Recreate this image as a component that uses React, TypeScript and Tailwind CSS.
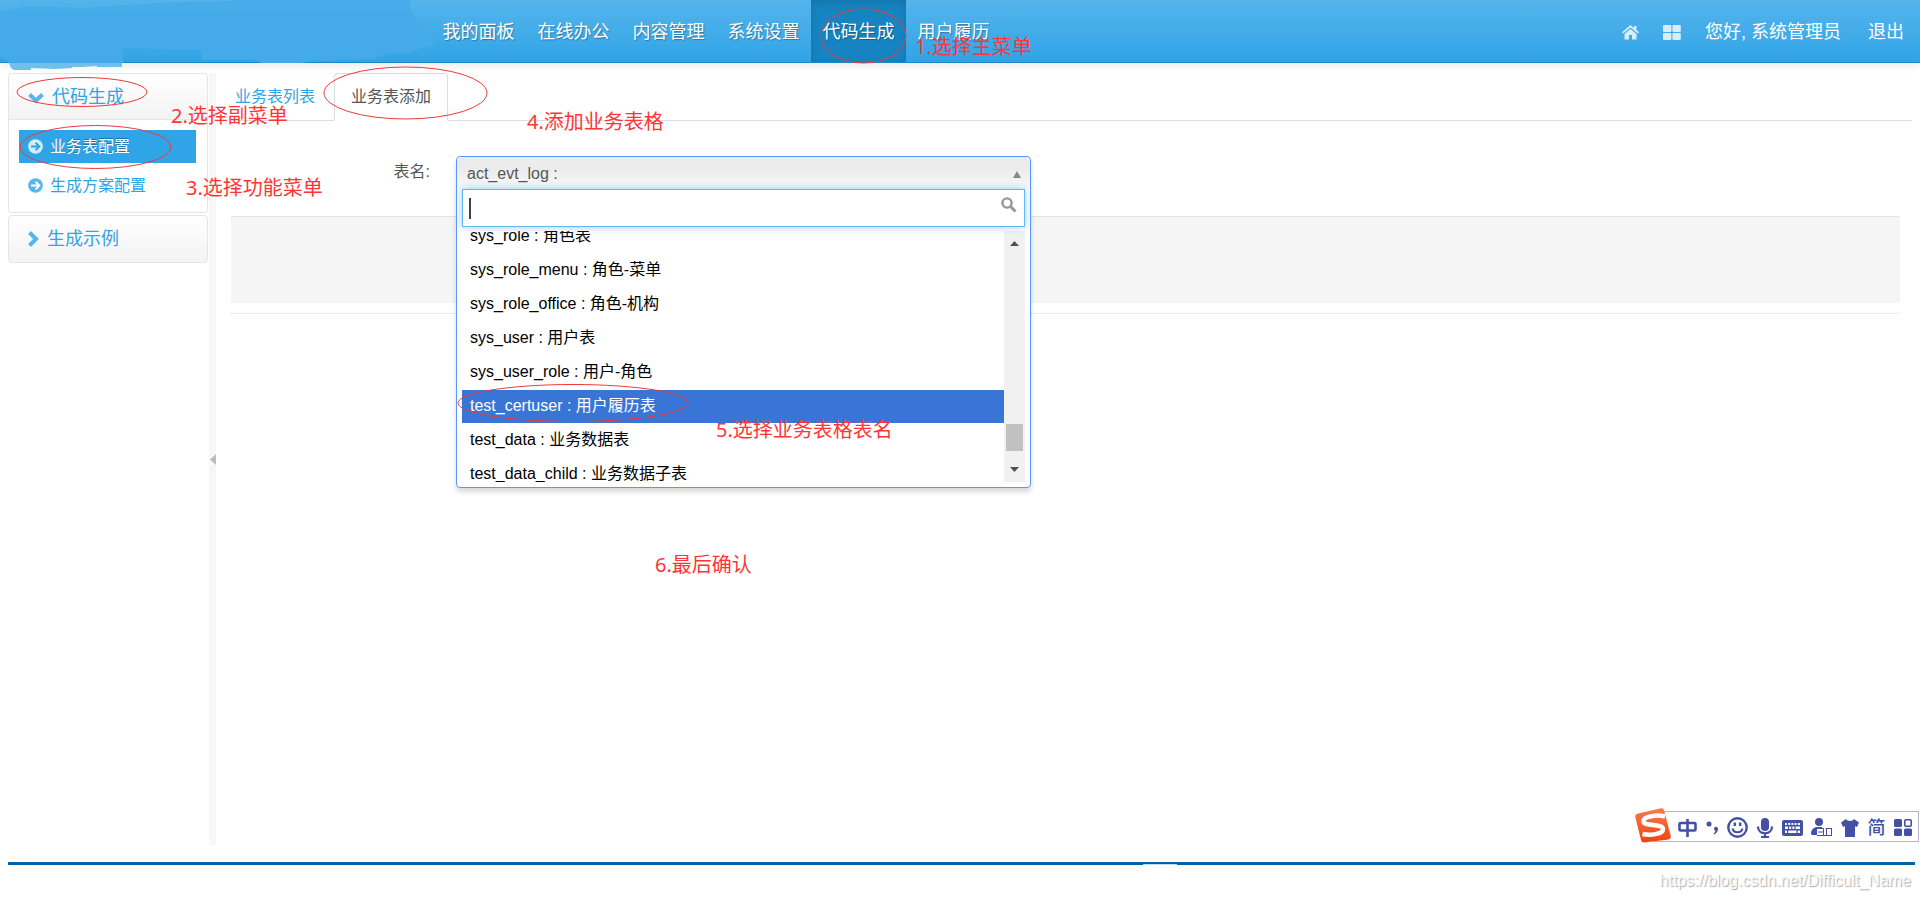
import React from "react";

const menu = ["我的面板", "在线办公", "内容管理", "系统设置", "代码生成", "用户履历"];

const tables = [
  "sys_role : 角色表",
  "sys_role_menu : 角色-菜单",
  "sys_role_office : 角色-机构",
  "sys_user : 用户表",
  "sys_user_role : 用户-角色",
  "test_certuser : 用户履历表",
  "test_data : 业务数据表",
  "test_data_child : 业务数据子表",
];

function Header() {
  return (
    <header className="relative flex h-[63px] items-stretch border-b border-[#1a87cd] bg-linear-to-b from-[#54b4eb] to-[#2fa4e7] text-lg text-white shadow-[0_1px_10px_rgba(0,0,0,0.12)]">
      <svg className="absolute top-0 left-0 h-[72px] w-[440px]" viewBox="0 0 440 72" aria-hidden="true">
        <path
          d="M0 12L28 6L80 8L160 3L260 0H410V10L420 24L434 34L434 45L414 50L412 53L385 54L372 59L320 61L300 63H262L254 60L202 60V50L160 49L123 48V63H9L0 56Z"
          fill="#46abe9"
          fillOpacity="0.9"
        />
        <path d="M9 63H122V67H97V66L82 67H72V68L55 69L31 68V70L14 70L11 68Z" fill="#70c0ee" />
      </svg>
      <nav className="ml-[431px] flex pt-0.5">
        {menu.map((m) => (
          <a
            key={m}
            href="#"
            className={
              m === "代码生成"
                ? "-mt-0.5 flex w-[95px] items-center justify-center bg-[#1684c2] pt-0.5 shadow-[inset_0_3px_8px_rgba(0,0,0,0.125)] [text-shadow:1px_1px_1px_rgba(0,0,0,0.3)]"
                : "flex w-[95px] items-center justify-center [text-shadow:1px_1px_1px_rgba(0,0,0,0.3)]"
            }
          >
            {m}
          </a>
        ))}
      </nav>
      <div className="ml-auto flex items-center pt-0.5 pr-4">
        <a href="#" aria-label="首页" className="mr-6">
          <svg width="17" height="15" viewBox="0 0 17 15" fill="#d6edfa" aria-hidden="true">
            <path d="M8.5 0L0 7.2L1.2 8.6L8.5 2.6L15.8 8.6L17 7.2L14.5 5V1H12V3Z" />
            <path d="M8.5 4L2.5 9V14.5H7V10H10V14.5H14.5V9Z" />
          </svg>
        </a>
        <a href="#" aria-label="主题" className="mr-6">
          <svg width="18" height="15" viewBox="0 0 18 15" fill="#d6edfa" aria-hidden="true">
            <rect width="8.4" height="7" rx="1" />
            <rect x="9.4" width="8.4" height="7" rx="1" />
            <rect y="8" width="8.4" height="7" rx="1" />
            <rect x="9.4" y="8" width="8.4" height="7" rx="1" />
          </svg>
        </a>
        <a href="#" className="mr-[27px]">您好, 系统管理员</a>
        <a href="#">退出</a>
      </div>
    </header>
  );
}

function CircleArrow({ fill, arrow }: { fill: string; arrow: string }) {
  return (
    <svg width="15" height="15" viewBox="0 0 15 15" aria-hidden="true">
      <circle cx="7.5" cy="7.5" r="7.3" fill={fill} />
      <path d="M3 7.5H11M7.6 3.8L11.3 7.5L7.6 11.2" fill="none" stroke={arrow} strokeWidth="2" />
    </svg>
  );
}

function Sidebar() {
  return (
    <aside className="flex w-[200px] shrink-0 flex-col gap-0.5 text-[#2fa4e7]">
      <section className="rounded border border-[#e5e5e5]">
        <button className="flex h-[46px] w-full items-center gap-2 rounded-t border-b border-[#e5e5e5] bg-linear-to-b from-white to-[#f3f3f3] pl-[19px] text-lg">
          <svg width="16" height="16" viewBox="0 0 16 16" aria-hidden="true">
            <path d="M1.5 5.5L8 11.5L14.5 5.5" fill="none" stroke="#55b5ec" strokeWidth="4" />
          </svg>
          代码生成
        </button>
        <ul className="flex flex-col gap-1.5 pt-2.5 pr-[11px] pb-2.5 pl-2.5">
          <li>
            <a
              href="#"
              className="flex h-[33px] items-center gap-[7px] bg-[#2fa4e7] pl-[9px] text-base text-white [text-shadow:0_-1px_0_rgba(0,0,0,0.3)]"
            >
              <CircleArrow fill="#d5edfa" arrow="#2fa4e7" />
              业务表配置
            </a>
          </li>
          <li>
            <a href="#" className="flex h-[33px] items-center gap-[7px] pl-[9px] text-base">
              <CircleArrow fill="#59b6ec" arrow="#ffffff" />
              生成方案配置
            </a>
          </li>
        </ul>
      </section>
      <section>
        <button className="flex h-12 w-full items-center gap-2 rounded border border-[#e5e5e5] bg-linear-to-b from-white to-[#f3f3f3] pl-[19px] text-lg">
          <svg width="11" height="16" viewBox="0 0 11 16" aria-hidden="true">
            <path d="M1.5 1.5L8 8L1.5 14.5" fill="none" stroke="#55b5ec" strokeWidth="4" />
          </svg>
          生成示例
        </button>
      </section>
    </aside>
  );
}

function TableSelect() {
  return (
    <div className="absolute top-0 left-0 z-10 flex h-[332px] w-[575px] flex-col rounded border border-[#5897fb] bg-white px-[5px] pb-[5px] shadow-[0_4px_5px_rgba(0,0,0,0.15)]">
      <button
        id="table-name"
        className="-mx-[5px] flex h-8 shrink-0 items-center justify-between rounded-t bg-linear-to-b from-[#ececec] from-40% to-[#fafafa] pt-0.5 pr-[9px] pl-2.5 text-base text-[#555]"
      >
        act_evt_log :
        <svg width="8" height="7" viewBox="0 0 8 7" aria-hidden="true">
          <path d="M4 0L8 7H0Z" fill="#888" />
        </svg>
      </button>
      <div className="relative flex h-[38px] shrink-0 items-center border border-[#66b5ee] bg-white shadow-[0_0_8px_rgba(82,168,236,0.6)]">
        <span className="ml-1.5 h-[21px] w-0.5 bg-[#444]" />
        <input aria-label="搜索" className="h-full min-w-0 flex-1 bg-transparent outline-none" />
        <svg className="mr-[7px] mb-1.5" width="16" height="16" viewBox="0 0 16 16" aria-hidden="true">
          <circle cx="6" cy="6" r="4.6" fill="none" stroke="#979797" strokeWidth="2.4" />
          <path d="M9.5 9.5L14.5 14.5" stroke="#979797" strokeWidth="3" />
        </svg>
      </div>
      <div className="mt-1 flex min-h-0 flex-1">
        <div className="flex-1 overflow-hidden">
          <ul className="-mt-[11px] flex flex-col gap-px text-base text-black">
            {tables.map((t) => (
              <li
                key={t}
                className={
                  t.startsWith("test_certuser")
                    ? "h-[33px] shrink-0 bg-[#3875d7] pl-2 leading-8 text-white"
                    : "h-[33px] shrink-0 pl-2 leading-8"
                }
              >
                {t}
              </li>
            ))}
          </ul>
        </div>
        <div className="flex w-[21px] flex-col items-center bg-[#f1f1f1] py-2.5">
          <svg width="9" height="5" viewBox="0 0 9 5" aria-hidden="true">
            <path d="M4.5 0L9 5H0Z" fill="#505050" />
          </svg>
          <span className="mt-auto h-[27px] w-[17px] bg-[#c1c1c1]" />
          <svg className="mt-4" width="9" height="5" viewBox="0 0 9 5" aria-hidden="true">
            <path d="M0 0H9L4.5 5Z" fill="#505050" />
          </svg>
        </div>
      </div>
    </div>
  );
}

function Content() {
  return (
    <main className="min-w-0 flex-1 pr-2 pl-[15px]">
      <div className="flex h-12 border-b border-[#ddd] text-base">
        <a href="#" className="flex items-center px-1 text-[#2fa4e7]">业务表列表</a>
        <a
          href="#"
          className="ml-[15px] flex h-12 w-[114px] items-center justify-center rounded-t border border-b-white border-[#ddd] bg-white text-[#555]"
        >
          业务表添加
        </a>
      </div>
      <form className="mr-3">
        <div className="flex h-[95px] items-start pt-[35px] text-[#555]">
          <label htmlFor="table-name" className="w-[199px] pt-1 text-right text-base">表名:</label>
          <div className="relative ml-[26px] h-8 w-[575px]">
            <TableSelect />
          </div>
        </div>
        <div className="h-[87px] border-t border-[#e5e5e5] bg-[#f5f5f5]" />
        <div className="mt-2.5 border-t border-dotted border-[#ddd]" />
      </form>
    </main>
  );
}

function ImeBar() {
  return (
    <div className="absolute top-[808px] right-[1px] h-[35px] w-[284px] text-[#4350a4]">
      <div className="mt-[3px] ml-[18px] flex h-[31px] items-center justify-between border border-[#b4b5c2] bg-white pt-0.5 pr-1.5 pl-6">
        <svg width="19" height="18" viewBox="0 0 19 18" fill="none" stroke="currentColor" strokeWidth="2.6" aria-hidden="true">
          <rect x="1.5" y="4" width="16" height="7.5" rx="1" />
          <path d="M9.5 0V18" />
        </svg>
        <svg width="13" height="14" viewBox="0 0 13 14" fill="currentColor" aria-hidden="true">
          <circle cx="3" cy="3" r="2.5" />
          <path d="M8 7.5a2 2 0 1 1 4 .5c0 2.500-1.500 4.500-4 5.500l-.6-1c1.300-.7 2-1.600 2-2.700C8.600 9.600 8 8.700 8 7.500Z" />
        </svg>
        <svg width="21" height="21" viewBox="0 0 21 21" fill="none" stroke="currentColor" strokeWidth="2.4" aria-hidden="true">
          <circle cx="10.500" cy="10.500" r="9.200" />
          <path d="M5.500 11.500c1 5 9 5 10 0" strokeWidth="2" />
          <path d="M7.800 5.500V9M13.200 5.500V9" />
        </svg>
        <svg width="16" height="20" viewBox="0 0 16 20" aria-hidden="true">
          <rect x="4" width="8" height="13" rx="4" fill="currentColor" />
          <path d="M1 8.500c0 9 14 9 14 0M8 15v4M4 19h8" fill="none" stroke="currentColor" strokeWidth="2.200" />
        </svg>
        <svg width="21" height="16" viewBox="0 0 21 16" aria-hidden="true">
          <path fillRule="evenodd" fill="currentColor" d="M2 0H19Q21 0 21 2V14Q21 16 19 16H2Q0 16 0 14V2Q0 0 2 0ZM3 3V5H5V3ZM6.200 3V5H8.200V3ZM9.400 3V5H11.400V3ZM12.600 3V5H14.600V3ZM15.800 3V5H18V3ZM3 6.500V9H6V6.500ZM7.200 6.500V9H9.200V6.500ZM10.400 6.500V9H12.400V6.500ZM13.600 6.500V9H18V6.500ZM3 10.500V13H5V10.500ZM6.200 10.500V13H14.600V10.500ZM15.800 10.500V13H18V10.500Z" />
        </svg>
        <svg width="21" height="19" viewBox="0 0 21 19" aria-hidden="true">
          <circle cx="8" cy="4" r="4" fill="currentColor" />
          <path d="M0 16c0-4 2-6.500 6-7h5v2H6v6H1Z" fill="currentColor" />
          <path d="M7 10.500H12.500V17.500H7M7 14H12.500M14.500 10.500H21M15.500 10.500V17.500M20.500 10.500V17.500M6 17.500H21" fill="none" stroke="currentColor" />
        </svg>
        <svg width="18" height="18" viewBox="0 0 18 18" fill="currentColor" aria-hidden="true">
          <path d="M5 0C6 2.500 12 2.500 13 0L18 3.500L16 8L14 7.300V18H4V7.300L2 8L0 3.500Z" />
        </svg>
        <span className="text-lg leading-none font-medium">简</span>
        <svg width="18" height="17" viewBox="0 0 18 17" fill="currentColor" aria-hidden="true">
          <rect width="8" height="8" rx="1.500" />
          <rect x="10.800" y="0.800" width="6.400" height="6.400" rx="1" fill="none" stroke="currentColor" strokeWidth="1.600" />
          <rect y="9.500" width="8" height="7.500" rx="1.500" />
          <rect x="10" y="9.500" width="8" height="7.500" rx="1.500" />
        </svg>
      </div>
      <svg className="absolute top-0 left-0" width="37" height="35" viewBox="0 0 37 35" aria-hidden="true">
        <defs>
          <linearGradient id="sogou" x1="0" y1="0" x2="0" y2="1">
            <stop offset="0" stopColor="#fb7a4a" />
            <stop offset="1" stopColor="#ee4410" />
          </linearGradient>
        </defs>
        <path d="M3 5.500L26 0.200Q28.500 0 29 2L35.800 28Q36 31 33.500 31.500L9 34.500Q6.500 34.500 6 32L0.300 9Q0 6.300 3 5.500Z" fill="url(#sogou)" />
        <path d="M30 8.500C22 6.500 8 8 8.500 13.500C9 18.500 28 15.500 28 21C28 26.500 15 27.500 7.500 26" fill="none" stroke="#fff" strokeWidth="4.500" />
      </svg>
    </div>
  );
}

function Annotations() {
  return (
    <div className="pointer-events-none absolute inset-0 z-20 overflow-hidden font-['Noto_Sans','Noto_Sans_CJK_SC',sans-serif] text-xl leading-6 whitespace-nowrap text-[#ff3535]">
      <svg className="absolute top-0 left-0" width="1100" height="500" viewBox="0 0 1100 500" fill="none" stroke="#ee3a3a" aria-hidden="true">
        <ellipse cx="863.500" cy="36" rx="42.500" ry="27" />
        <ellipse cx="82" cy="92" rx="65" ry="14.500" />
        <ellipse cx="95.500" cy="147" rx="75.500" ry="21.500" />
        <ellipse cx="405.500" cy="93" rx="81.500" ry="26" />
        <ellipse cx="573" cy="403" rx="115" ry="18.500" />
      </svg>
      <span className="absolute top-[35px] left-[915px]">1.选择主菜单</span>
      <span className="absolute top-[104px] left-[171px]">2.选择副菜单</span>
      <span className="absolute top-[176px] left-[186px]">3.选择功能菜单</span>
      <span className="absolute top-[110px] left-[527px]">4.添加业务表格</span>
      <span className="absolute top-[418px] left-[716px]">5.选择业务表格表名</span>
      <span className="absolute top-[553px] left-[655px]">6.最后确认</span>
    </div>
  );
}

export default function App() {
  return (
    <div className="relative flex min-h-screen flex-col bg-white font-['Liberation_Sans','Noto_Sans_CJK_SC',sans-serif]">
      <Header />
      <div className="flex flex-1 pt-2.5 pl-2">
        <Sidebar />
        <div className="ml-px flex w-[7px] shrink-0 items-center justify-end bg-[#f7f7f7]">
          <svg width="6" height="11" viewBox="0 0 6 11" aria-hidden="true">
            <path d="M6 0V11L0 5.500Z" fill="#bbb" />
          </svg>
        </div>
        <Content />
      </div>
      <footer className="relative mt-[17px] mr-[5px] ml-2 h-[37px] border-t-[3px] border-[#0663a3] pt-1 pr-1 text-right text-base text-[#fafafa] [text-shadow:1px_1px_1px_rgba(0,0,0,0.35)]">
        <span className="absolute -top-px left-[1135px] h-px w-[34px] bg-[#c5dcea]" />
        https://blog.csdn.net/Difficult_Name
      </footer>
      <ImeBar />
      <Annotations />
    </div>
  );
}
